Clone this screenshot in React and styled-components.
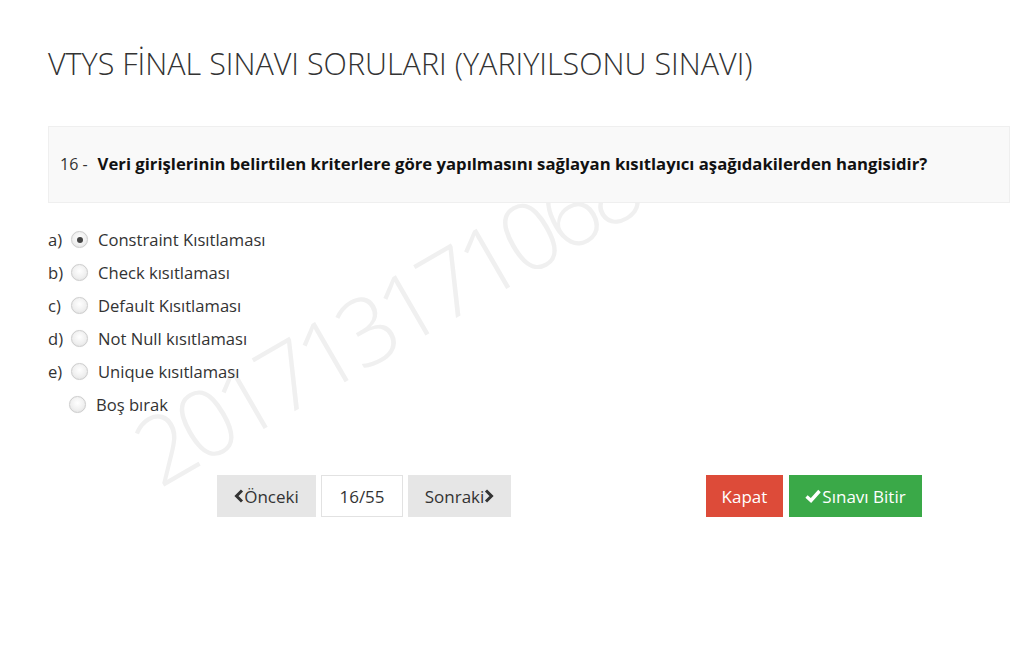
import React from "react";
import styled, { createGlobalStyle } from "styled-components";

const Global = createGlobalStyle`
  html, body { margin: 0; padding: 0; background: #fff; }
  body { font-family: "Open Sans", "Noto Sans", sans-serif; color: #333; }
`;

const Page = styled.div`
  position: relative;
  overflow: hidden;
  width: 1018px;
  height: 656px;
  padding: 0 8px 0 48px;
  box-sizing: border-box;
`;

const Watermark = styled.div`
  position: absolute;
  left: 160px;
  top: 406px;
  transform-origin: 0 0.888em;
  transform: rotate(-30deg);
  font-family: "Open Sans", sans-serif;
  font-weight: 300;
  font-size: 94px;
  letter-spacing: -7px;
  line-height: 1;
  color: #f0f0f0;
  white-space: nowrap;
  pointer-events: none;
  z-index: 0;
`;

const Title = styled.h1`
  position: relative;
  margin: 0;
  padding-top: 45px;
  font-size: 30.5px;
  font-weight: 300;
  line-height: 36px;
  color: #333;
`;

const QuestionBox = styled.div`
  position: relative;
  z-index: 1;
  margin-top: 45px;
  height: 73px;
  background: #f9f9f9;
  border: 1px solid #efefef;
  display: flex;
  align-items: center;
  padding: 0 11px 2px;
  font-size: 16.7px;
`;

const QNum = styled.span`
  font-weight: 400;
  font-size: 16px;
  color: #333;
  margin-right: 10px;
`;

const QText = styled.span`
  font-weight: 700;
  color: #111;
`;

const Options = styled.div`
  position: relative;
  z-index: 1;
  margin-top: 20px;
  display: flex;
  flex-direction: column;
`;

const OptionRow = styled.label`
  display: flex;
  align-items: center;
  height: 33px;
  font-size: 16.6px;
  color: #333;
  padding-left: ${(p) => (p.$blank ? "21px" : "0")};
`;

const Letter = styled.span`
  width: 23px;
  display: inline-block;
`;

const Radio = styled.span`
  width: 17px;
  height: 17px;
  border-radius: 50%;
  box-sizing: border-box;
  border: 1px solid #cdcdcd;
  background: radial-gradient(circle at 50% 40%, #ffffff 0%, #f0f0f0 55%, #dedede 100%);
  box-shadow: 0 0 1px rgba(0, 0, 0, 0.1);
  display: inline-flex;
  align-items: center;
  justify-content: center;
  margin-right: 10px;
  &::after {
    content: "";
    width: 6px;
    height: 6px;
    border-radius: 50%;
    background: ${(p) => (p.$checked ? "#444" : "transparent")};
  }
`;

const ButtonsRow = styled.div`
  position: relative;
  z-index: 1;
  margin-top: 54px;
  display: flex;
  justify-content: space-between;
  padding: 0 88px 0 169px;
`;

const Group = styled.div`
  display: flex;
  gap: ${(p) => p.$gap || "5px"};
`;

const Btn = styled.button`
  height: 42px;
  box-sizing: border-box;
  border: ${(p) => (p.$variant === "page" ? "1px solid #e2e2e2" : "none")};
  background: ${(p) =>
    p.$variant === "red"
      ? "#dd4b39"
      : p.$variant === "green"
      ? "#3aa948"
      : p.$variant === "page"
      ? "#fff"
      : "#e6e6e6"};
  color: ${(p) => (p.$variant === "red" || p.$variant === "green" ? "#fff" : "#333")};
  width: ${(p) => p.$w}px;
  font-family: "Open Sans", sans-serif;
  font-size: 17px;
  display: flex;
  align-items: center;
  justify-content: center;
  padding: 0;
  cursor: pointer;
`;

const Chevron = ({ dir }) => (
  <svg width="10" height="14" viewBox="0 0 10 14" style={{ display: "block" }}>
    <polyline
      points={dir === "left" ? "8,1.5 2.5,7 8,12.5" : "2,1.5 7.5,7 2,12.5"}
      fill="none"
      stroke="#333"
      strokeWidth="3"
      strokeLinejoin="miter"
    />
  </svg>
);

const Check = () => (
  <svg width="16" height="14" viewBox="0 0 16 14" style={{ display: "block", marginRight: 1 }}>
    <polyline points="1.5,7.5 6,11.5 14.5,2" fill="none" stroke="#fff" strokeWidth="3.4" />
  </svg>
);

const options = [
  { l: "a)", t: "Constraint Kısıtlaması", checked: true },
  { l: "b)", t: "Check kısıtlaması" },
  { l: "c)", t: "Default Kısıtlaması" },
  { l: "d)", t: "Not Null kısıtlaması" },
  { l: "e)", t: "Unique kısıtlaması" },
];

export default function App() {
  return (
    <>
      <Global />
      <Page>
        <Watermark>201713171068</Watermark>
        <Title>VTYS FİNAL SINAVI SORULARI (YARIYILSONU SINAVI)</Title>
        <QuestionBox>
          <QNum>16 -</QNum>
          <QText>Veri girişlerinin belirtilen kriterlere göre yapılmasını sağlayan kısıtlayıcı aşağıdakilerden hangisidir?</QText>
        </QuestionBox>
        <Options>
          {options.map((o) => (
            <OptionRow key={o.l}>
              <Letter>{o.l}</Letter>
              <Radio $checked={o.checked} />
              {o.t}
            </OptionRow>
          ))}
          <OptionRow $blank>
            <Radio />
            Boş bırak
          </OptionRow>
        </Options>
        <ButtonsRow>
          <Group>
            <Btn $w={99}>
              <Chevron dir="left" />
              Önceki
            </Btn>
            <Btn $variant="page" $w={82}>16/55</Btn>
            <Btn $w={103}>
              Sonraki
              <Chevron dir="right" />
            </Btn>
          </Group>
          <Group $gap="6px">
            <Btn $variant="red" $w={77}>Kapat</Btn>
            <Btn $variant="green" $w={133}>
              <Check />
              Sınavı Bitir
            </Btn>
          </Group>
        </ButtonsRow>
      </Page>
    </>
  );
}
